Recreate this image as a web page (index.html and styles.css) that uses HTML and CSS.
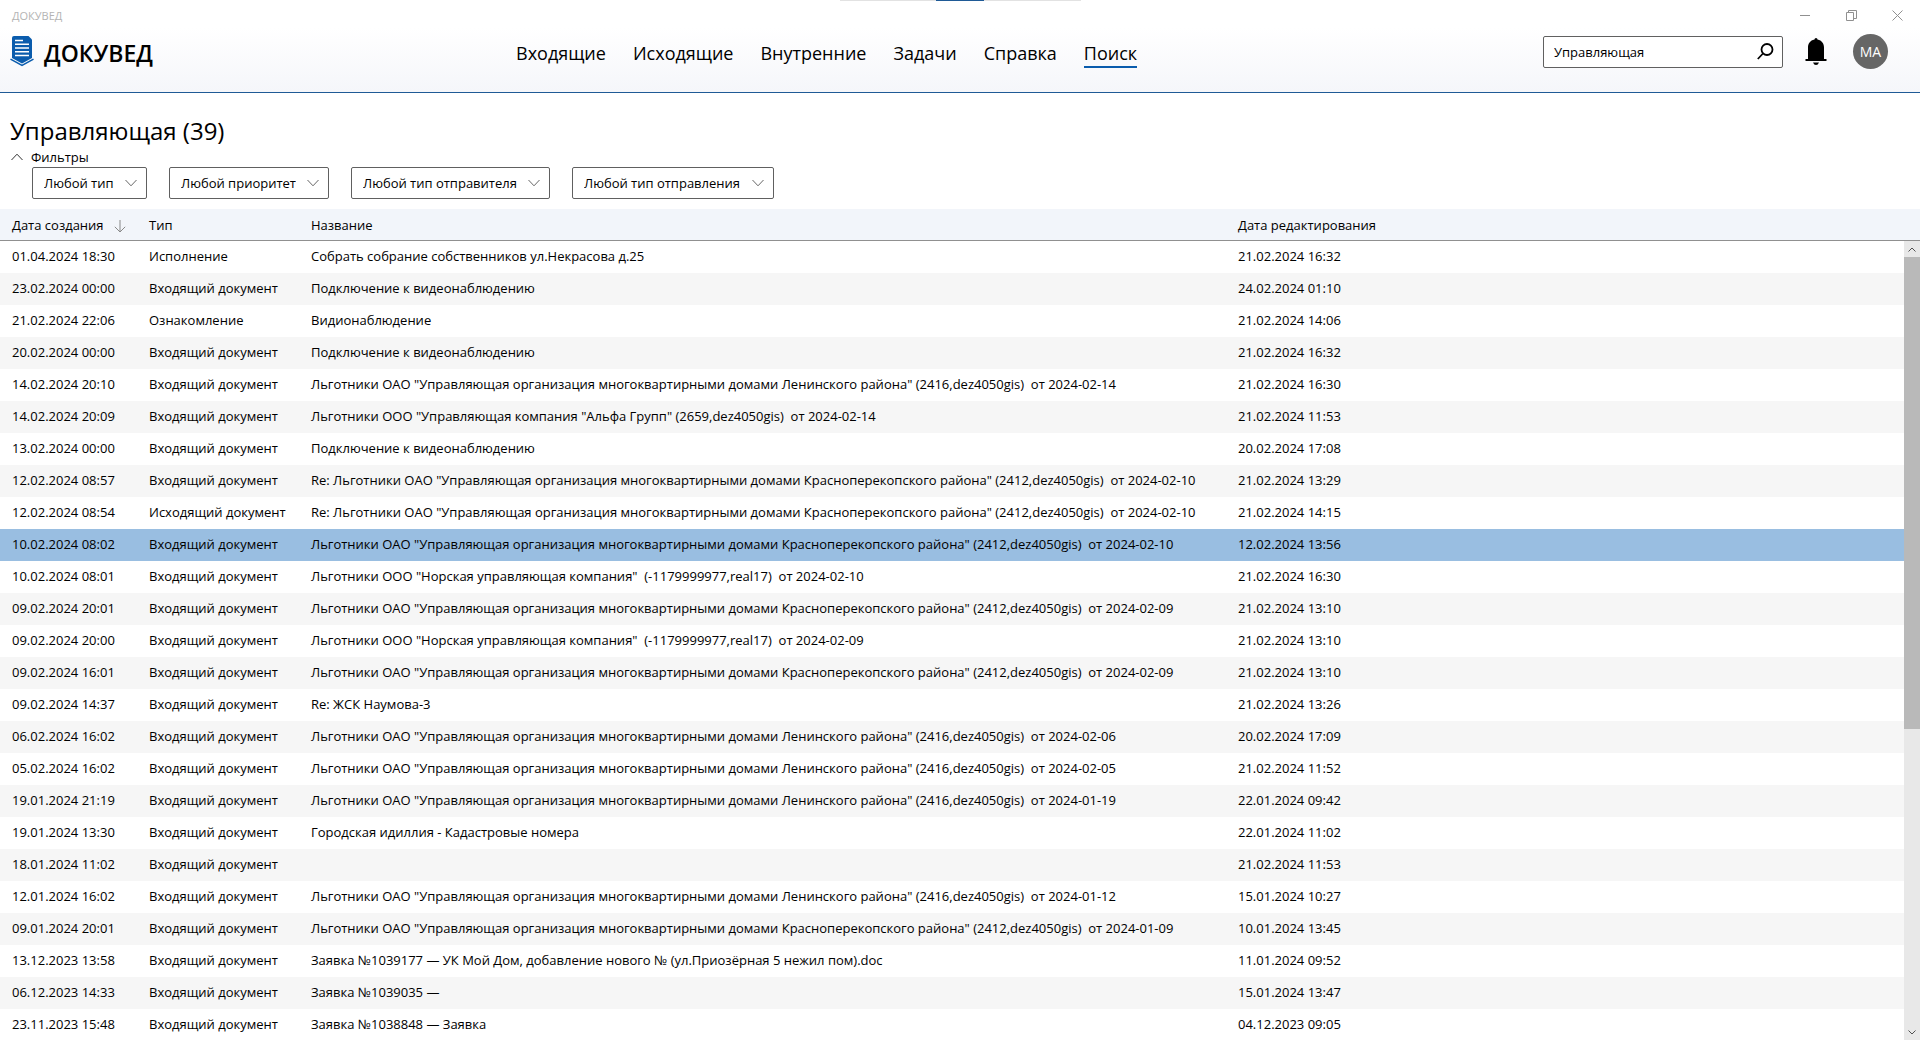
FILE: index.html
```html
<!DOCTYPE html>
<html lang="ru">
<head>
<meta charset="utf-8">
<title>ДОКУВЕД</title>
<link rel="stylesheet" href="styles.css">
</head>
<body>
<header class="header">
  <div class="handle"></div>
  <div class="titlebar">
    <span class="app-name">ДОКУВЕД</span>
    <div class="window-buttons">
      <button class="window-button" aria-label="Свернуть"><svg width="11" height="11" viewBox="0 0 11 11"><path d="M0 5.5h10"/></svg></button>
      <button class="window-button" aria-label="Восстановить"><svg width="11" height="11" viewBox="0 0 11 11"><path d="M.5 2.500h7v8h-7zM2.500 2.500v-2h8v8h-3"/></svg></button>
      <button class="window-button" aria-label="Закрыть"><svg width="11" height="11" viewBox="0 0 11 11"><path d="M.5.5l10 10M10.500.5l-10 10"/></svg></button>
    </div>
  </div>
  <div class="toolbar">
    <a class="brand" href="#">
      <svg width="24" height="31" viewBox="0 0 24 31"><path fill="#0a5cad" d="M4 0h14.500L22 3.500v18.500l-10 5.500L2 22V2q0-2 2-2z"/><path fill="none" stroke="#0a5cad" stroke-width="1.500" d="M.5 23.200L12 29.500l11.500-6.300"/><path fill="none" stroke="#fff" stroke-width="1.500" d="M5 4.500h8M5 8.200h14M5 12h14M5 15.800h14M5 19.500h14"/></svg>
      <span class="brand-name">ДОКУВЕД</span>
    </a>
    <nav class="nav">
      <a class="nav-link" href="#">Входящие</a>
      <a class="nav-link" href="#">Исходящие</a>
      <a class="nav-link" href="#">Внутренние</a>
      <a class="nav-link" href="#">Задачи</a>
      <a class="nav-link" href="#">Справка</a>
      <a class="nav-link active" href="#">Поиск</a>
    </nav>
    <div class="tools">
      <form class="search">
        <input class="search-input" type="text" value="Управляющая" aria-label="Поиск">
        <button class="icon-button" type="button" aria-label="Найти"><svg width="17" height="17" viewBox="0 0 17 17"><circle cx="10" cy="6.500" r="5.500" fill="none" stroke="#000" stroke-width="1.800"/><path d="M6 10.500L.8 16" stroke="#000" stroke-width="1.800"/></svg></button>
      </form>
      <button class="icon-button bell" aria-label="Уведомления"><svg width="22" height="27" viewBox="0 0 22 27"><path d="M9.500 1.500a1.500 1.500 0 0 1 3 0C17 2.500 19 5.500 19 9.500V21h2.500v2H.5v-2H3V9.500c0-4 2-7 6.500-8zM8 24.500h6q-1 2.500-3 2.500t-3-2.500z"/></svg></button>
      <button class="avatar">МА</button>
    </div>
  </div>
</header>
<main class="main">
  <h1 class="title">Управляющая (39)</h1>
  <details class="filters" open>
    <summary class="filters-toggle"><svg width="12" height="8" viewBox="0 0 12 8"><path d="M.5 7L6 1.200 11.500 7" fill="none" stroke="#333"/></svg>Фильтры</summary>
    <div class="filter-list">
      <div class="filter"><select class="filter-select" aria-label="Тип"><option>Любой тип</option></select><svg class="chevron" width="12" height="8" viewBox="0 0 12 8"><path d="M.5 1L6 6.800 11.500 1"/></svg></div>
      <div class="filter"><select class="filter-select" aria-label="Приоритет"><option>Любой приоритет</option></select><svg class="chevron" width="12" height="8" viewBox="0 0 12 8"><path d="M.5 1L6 6.800 11.500 1"/></svg></div>
      <div class="filter"><select class="filter-select" aria-label="Тип отправителя"><option>Любой тип отправителя</option></select><svg class="chevron" width="12" height="8" viewBox="0 0 12 8"><path d="M.5 1L6 6.800 11.500 1"/></svg></div>
      <div class="filter"><select class="filter-select" aria-label="Тип отправления"><option>Любой тип отправления</option></select><svg class="chevron" width="12" height="8" viewBox="0 0 12 8"><path d="M.5 1L6 6.800 11.500 1"/></svg></div>
    </div>
  </details>
  <div class="results">
    <table class="table">
      <colgroup><col class="col-created"><col class="col-type"><col class="col-name"><col></colgroup>
      <thead>
        <tr><th>Дата создания<svg class="sort" width="12" height="13" viewBox="0 0 12 13"><path d="M6 0v12M.8 6.800L6 12l5.200-5.200" fill="none" stroke="#888"/></svg></th><th>Тип</th><th>Название</th><th>Дата редактирования</th></tr>
      </thead>
      <tbody>
        <tr><td>01.04.2024 18:30</td><td>Исполнение</td><td>Собрать собрание собственников ул.Некрасова д.25</td><td>21.02.2024 16:32</td></tr>
        <tr><td>23.02.2024 00:00</td><td>Входящий документ</td><td>Подключение к видеонаблюдению</td><td>24.02.2024 01:10</td></tr>
        <tr><td>21.02.2024 22:06</td><td>Ознакомление</td><td>Видионаблюдение</td><td>21.02.2024 14:06</td></tr>
        <tr><td>20.02.2024 00:00</td><td>Входящий документ</td><td>Подключение к видеонаблюдению</td><td>21.02.2024 16:32</td></tr>
        <tr><td>14.02.2024 20:10</td><td>Входящий документ</td><td>Льготники ОАО "Управляющая организация многоквартирными домами Ленинского района" (2416,dez4050gis)  от 2024-02-14</td><td>21.02.2024 16:30</td></tr>
        <tr><td>14.02.2024 20:09</td><td>Входящий документ</td><td>Льготники ООО "Управляющая компания "Альфа Групп" (2659,dez4050gis)  от 2024-02-14</td><td>21.02.2024 11:53</td></tr>
        <tr><td>13.02.2024 00:00</td><td>Входящий документ</td><td>Подключение к видеонаблюдению</td><td>20.02.2024 17:08</td></tr>
        <tr><td>12.02.2024 08:57</td><td>Входящий документ</td><td>Re: Льготники ОАО "Управляющая организация многоквартирными домами Красноперекопского района" (2412,dez4050gis)  от 2024-02-10</td><td>21.02.2024 13:29</td></tr>
        <tr><td>12.02.2024 08:54</td><td>Исходящий документ</td><td>Re: Льготники ОАО "Управляющая организация многоквартирными домами Красноперекопского района" (2412,dez4050gis)  от 2024-02-10</td><td>21.02.2024 14:15</td></tr>
        <tr class="selected"><td>10.02.2024 08:02</td><td>Входящий документ</td><td>Льготники ОАО "Управляющая организация многоквартирными домами Красноперекопского района" (2412,dez4050gis)  от 2024-02-10</td><td>12.02.2024 13:56</td></tr>
        <tr><td>10.02.2024 08:01</td><td>Входящий документ</td><td>Льготники ООО "Норская управляющая компания"  (-1179999977,real17)  от 2024-02-10</td><td>21.02.2024 16:30</td></tr>
        <tr><td>09.02.2024 20:01</td><td>Входящий документ</td><td>Льготники ОАО "Управляющая организация многоквартирными домами Красноперекопского района" (2412,dez4050gis)  от 2024-02-09</td><td>21.02.2024 13:10</td></tr>
        <tr><td>09.02.2024 20:00</td><td>Входящий документ</td><td>Льготники ООО "Норская управляющая компания"  (-1179999977,real17)  от 2024-02-09</td><td>21.02.2024 13:10</td></tr>
        <tr><td>09.02.2024 16:01</td><td>Входящий документ</td><td>Льготники ОАО "Управляющая организация многоквартирными домами Красноперекопского района" (2412,dez4050gis)  от 2024-02-09</td><td>21.02.2024 13:10</td></tr>
        <tr><td>09.02.2024 14:37</td><td>Входящий документ</td><td>Re: ЖСК Наумова-3</td><td>21.02.2024 13:26</td></tr>
        <tr><td>06.02.2024 16:02</td><td>Входящий документ</td><td>Льготники ОАО "Управляющая организация многоквартирными домами Ленинского района" (2416,dez4050gis)  от 2024-02-06</td><td>20.02.2024 17:09</td></tr>
        <tr><td>05.02.2024 16:02</td><td>Входящий документ</td><td>Льготники ОАО "Управляющая организация многоквартирными домами Ленинского района" (2416,dez4050gis)  от 2024-02-05</td><td>21.02.2024 11:52</td></tr>
        <tr><td>19.01.2024 21:19</td><td>Входящий документ</td><td>Льготники ОАО "Управляющая организация многоквартирными домами Ленинского района" (2416,dez4050gis)  от 2024-01-19</td><td>22.01.2024 09:42</td></tr>
        <tr><td>19.01.2024 13:30</td><td>Входящий документ</td><td>Городская идиллия - Кадастровые номера</td><td>22.01.2024 11:02</td></tr>
        <tr><td>18.01.2024 11:02</td><td>Входящий документ</td><td></td><td>21.02.2024 11:53</td></tr>
        <tr><td>12.01.2024 16:02</td><td>Входящий документ</td><td>Льготники ОАО "Управляющая организация многоквартирными домами Ленинского района" (2416,dez4050gis)  от 2024-01-12</td><td>15.01.2024 10:27</td></tr>
        <tr><td>09.01.2024 20:01</td><td>Входящий документ</td><td>Льготники ОАО "Управляющая организация многоквартирными домами Красноперекопского района" (2412,dez4050gis)  от 2024-01-09</td><td>10.01.2024 13:45</td></tr>
        <tr><td>13.12.2023 13:58</td><td>Входящий документ</td><td>Заявка №1039177 — УК Мой Дом, добавление нового № (ул.Приозёрная 5 нежил пом).doc</td><td>11.01.2024 09:52</td></tr>
        <tr><td>06.12.2023 14:33</td><td>Входящий документ</td><td>Заявка №1039035 —</td><td>15.01.2024 13:47</td></tr>
        <tr><td>23.11.2023 15:48</td><td>Входящий документ</td><td>Заявка №1038848 — Заявка</td><td>04.12.2023 09:05</td></tr>
      </tbody>
    </table>
    <div class="scrollbar">
      <button class="scroll-button" aria-label="Вверх"><svg width="8" height="5" viewBox="0 0 8 5"><path d="M.5 4.500L4 1l3.500 3.500"/></svg></button>
      <div class="scroll-thumb"></div>
      <div class="scroll-rest"></div>
      <button class="scroll-button" aria-label="Вниз"><svg width="8" height="5" viewBox="0 0 8 5"><path d="M.5.5L4 4 7.500.5"/></svg></button>
    </div>
  </div>
</main>
</body>
</html>
```
FILE: styles.css
```css
* { box-sizing: border-box; }

body {
  margin: 0;
  height: 100vh;
  display: flex;
  flex-direction: column;
  overflow: hidden;
  background: #fff;
  color: #000;
  font: 13px/18px "Open Sans", "Noto Sans", sans-serif;
}

button, input, select { font: inherit; color: inherit; margin: 0; }
button { border: 0; padding: 0; background: none; }
svg { display: block; flex: none; }

/* Header */
.header {
  position: relative;
  flex: none;
  border-bottom: 1px solid #1f5a96;
  background: linear-gradient(#fff 30%, #f5f6fa);
}

.handle {
  position: absolute;
  top: 0;
  left: 50%;
  width: 241px;
  height: 1px;
  margin-left: -120px;
  background: linear-gradient(90deg, #e2e2e2 96px, #1f5a96 96px 144px, #e2e2e2 144px);
}

.titlebar {
  display: flex;
  justify-content: space-between;
  height: 31px;
  padding-left: 12px;
}

.app-name { font-size: 11px; line-height: 31px; color: #b4b4b4; }
.window-buttons { display: flex; }

.window-button {
  display: flex;
  align-items: center;
  justify-content: center;
  width: 46px;
}
.window-button path { fill: none; stroke: #909090; }

.toolbar {
  display: flex;
  align-items: center;
  height: 61px;
  padding: 0 32px 20px 10px;
}

.brand {
  display: flex;
  align-items: center;
  gap: 10px;
  width: 506px;
  color: #000;
  text-decoration: none;
}
.brand-name { padding-top: 2px; font-size: 23px; line-height: 30px; font-weight: 600; }

.nav { display: flex; gap: 27px; }
.nav-link {
  padding-top: 4px;
  border-bottom: 2px solid transparent;
  color: #000;
  font-size: 18px;
  line-height: 26px;
  text-decoration: none;
}
.nav-link.active { border-color: #0a5cad; }

.tools { display: flex; align-items: center; margin-left: auto; }

.search {
  display: flex;
  align-items: center;
  width: 240px;
  height: 32px;
  padding: 0 8px 0 10px;
  border: 1px solid #606060;
  border-radius: 2px;
  background: #fff;
}
.search-input {
  flex: 1;
  min-width: 0;
  padding: 0;
  border: 0;
  outline: 0;
  background: none;
}

.bell { margin: 0 26px 0 22px; }

.avatar {
  width: 35px;
  height: 35px;
  border-radius: 50%;
  background: #666;
  color: #fff;
  font-size: 14px;
}

/* Page */
.main {
  display: flex;
  flex: 1;
  flex-direction: column;
  min-height: 0;
  padding-top: 20px;
}

.title {
  margin: 0;
  padding-left: 10px;
  font-size: 24px;
  line-height: 35px;
  font-weight: 400;
}

.filters { flex: none; padding-bottom: 10px; }
.filters-toggle {
  display: flex;
  align-items: center;
  gap: 8px;
  padding: 0 0 1px 11px;
  list-style: none;
}
.filter-list { display: flex; gap: 22px; padding-left: 32px; }
.filter { position: relative; }
.filter-select {
  display: block;
  height: 32px;
  padding: 0 32px 0 11px;
  border: 1px solid #606060;
  border-radius: 2px;
  background: #fff;
  appearance: none;
}
.chevron {
  position: absolute;
  top: 12px;
  right: 10px;
  pointer-events: none;
}
.chevron path { fill: none; stroke: #666; }

/* Results */
.results { position: relative; flex: 1; min-height: 0; overflow: hidden; }

.table {
  width: 100%;
  border-collapse: separate;
  border-spacing: 0;
  table-layout: fixed;
}
.col-created { width: 137px; }
.col-type { width: 162px; }
.col-name { width: 927px; }

.table th, .table td {
  height: 32px;
  padding: 0 0 2px 12px;
  text-align: left;
  font-weight: 400;
  white-space: pre;
}
.table th { padding-bottom: 0; background: #f2f5fa; border-bottom: 1px solid #909090; }
.table tbody tr:nth-child(even) { background: #f6f6f6; }
.table tbody tr.selected:nth-child(n) { background: #99bee1; }
.sort { display: inline-block; margin-left: 10px; vertical-align: middle; }

.scrollbar {
  position: absolute;
  top: 32px;
  right: 0;
  bottom: 0;
  display: flex;
  flex-direction: column;
  width: 16px;
  background: #e8e8e8;
}
.scroll-button {
  display: flex;
  flex: none;
  align-items: center;
  justify-content: center;
  height: 16px;
}
.scroll-button path { fill: none; stroke: #505050; }
.scroll-thumb { flex: 8; background: #b9b9b9; }
.scroll-rest { flex: 5; }
```
